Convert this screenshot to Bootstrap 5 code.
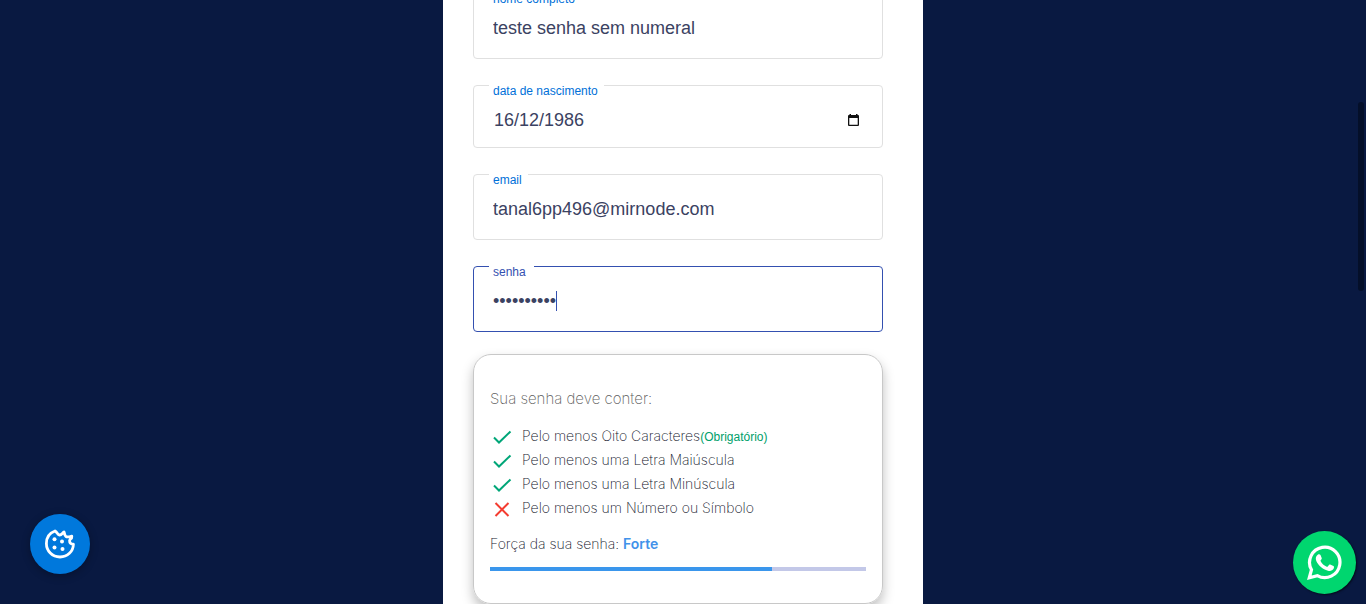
<!DOCTYPE html>
<html lang="pt-BR">
<head>
<meta charset="utf-8">
<meta name="viewport" content="width=device-width, initial-scale=1">
<title>Cadastro</title>
<link href="https://cdn.jsdelivr.net/npm/bootstrap@5.3.0/dist/css/bootstrap.min.css" rel="stylesheet">
<style>
  body { background: #091941; font-family: "Liberation Sans", sans-serif; color: #3b4262; }
  .signup-panel { max-width: 480px; padding: 0 40px 0 30px; }
  .signup-form { margin-top: -7px; }
  .fields { gap: 26px; }
  .field { border: 1px solid #e0e0e0; border-radius: 4px; height: 66px; padding: 4px 19px 0; }
  .field-date { height: 63px; padding: 7px 19px 0 20px; }
  .field label { position: absolute; top: -4px; left: 15px; padding: 0 6px 0 4px; background: #fff; color: #0070d8; font-size: 12px; line-height: 18px; }
  .field input { font-size: 18px; line-height: 24px; color: #3b4262; padding: 0; border: 0; border-radius: 0; background: transparent; box-shadow: none; }
  .field input:focus { box-shadow: none; }
  .field-active { border-color: #3450b0; }
  .field-active label { color: #3450b0; padding-right: 8px; }
  .caret-bar { position: absolute; left: 82px; top: 24px; width: 1px; height: 20px; background: #3450b0; }
  .cal-btn { width: 24px; height: 24px; margin-right: -2px; }
  .rules { margin-top: 22px; height: 250px; border: 1px solid #c8c8c8; border-radius: 18px; padding: 32px 16px 0; box-shadow: 0 6px 12px rgba(0,0,0,.25); font-family: Inter, sans-serif; font-weight: 200; font-size: 14px; line-height: 24px; color: #14162c; }
  .rules-title { font-size: 15px; color: #606060; margin-bottom: 13px; }
  .rules li { gap: 8px; height: 24px; }
  .required-tag { font-family: "Liberation Sans", sans-serif; font-size: 12px; line-height: 20px; font-weight: 400; color: #00a06a; }
  .strength { margin-top: 12px; }
  .strength strong { font-size: 14px; font-weight: 600; color: #4192ea; }
  .strength-bar { height: 4px; margin-top: 11px; border-radius: 0; background: #c3c8e8; }
  .strength-bar .progress-bar { background: #3a96ec; }
  .cookie-btn { bottom: 30px; left: 30px; width: 60px; height: 60px; background: #0078dc; box-shadow: 0 2px 8px rgba(0,0,0,.3); z-index: 5; }
  .whats-btn { bottom: 10px; right: 10px; width: 63px; height: 63px; background: #00d66f; box-shadow: 1px 1px 2px rgba(0,0,0,.6); z-index: 5; }
  .scroll-thumb { top: 102px; right: 2px; width: 6px; height: 189px; border-radius: 3px; background: #040f29; }
</style>
</head>
<body class="overflow-hidden">
<main class="signup-panel bg-white min-vh-100 mx-auto overflow-hidden">
  <form class="signup-form">
    <div class="fields d-flex flex-column">
      <div class="field position-relative d-flex align-items-center">
        <label for="nome">nome completo</label>
        <input class="form-control" id="nome" type="text" value="teste senha sem numeral">
      </div>
      <div class="field field-date position-relative d-flex align-items-center">
        <label for="nascimento">data de nascimento</label>
        <input class="form-control" id="nascimento" type="text" inputmode="numeric" value="16/12/1986">
        <button class="cal-btn btn p-0 border-0 d-flex align-items-center justify-content-center flex-shrink-0" type="button" aria-label="Abrir calendário">
          <svg width="11" height="12" viewBox="0 0 11 12"><path d="M0 2Q0 1 1 1H1.5V0H3V1H8V0H9.500V1H10Q11 1 11 2V11Q11 12 10 12H1Q0 12 0 11ZM1.300 4V10.700H9.700V4Z" fill="#111" fill-rule="evenodd"/></svg>
        </button>
      </div>
      <div class="field position-relative d-flex align-items-center">
        <label for="email">email</label>
        <input class="form-control" id="email" type="email" value="tanal6pp496@mirnode.com">
      </div>
      <div class="field field-active position-relative d-flex align-items-center">
        <label for="senha">senha</label>
        <input class="form-control" id="senha" type="password" value="abcdefghiJ">
        <span class="caret-bar"></span>
      </div>
    </div>
    <section class="rules">
      <p class="rules-title">Sua senha deve conter:</p>
      <ul class="list-unstyled mb-0">
        <li class="d-flex align-items-center"><svg width="24" height="24" viewBox="0 0 24 24" fill="none" stroke="#00a678" stroke-width="2"><path d="M4 13.500L9 18.500L20.500 7.500"/></svg><span>Pelo menos Oito Caracteres<span class="required-tag">(Obrigatório)</span></span></li>
        <li class="d-flex align-items-center"><svg width="24" height="24" viewBox="0 0 24 24" fill="none" stroke="#00a678" stroke-width="2"><path d="M4 13.500L9 18.500L20.500 7.500"/></svg><span>Pelo menos uma Letra Maiúscula</span></li>
        <li class="d-flex align-items-center"><svg width="24" height="24" viewBox="0 0 24 24" fill="none" stroke="#00a678" stroke-width="2"><path d="M4 13.500L9 18.500L20.500 7.500"/></svg><span>Pelo menos uma Letra Minúscula</span></li>
        <li class="d-flex align-items-center"><svg width="24" height="24" viewBox="0 0 24 24" fill="none" stroke="#f43c30" stroke-width="2"><path d="M5.500 7L18.500 20M18.500 7L5.500 20"/></svg><span>Pelo menos um Número ou Símbolo</span></li>
      </ul>
      <p class="strength mb-0">Força da sua senha: <strong>Forte</strong></p>
      <div class="strength-bar progress" role="progressbar" aria-label="Força da senha" aria-valuenow="75" aria-valuemin="0" aria-valuemax="100"><div class="progress-bar" style="width:75%"></div></div>
    </section>
  </form>
</main>
<button class="cookie-btn btn border-0 rounded-circle p-0 position-fixed d-flex align-items-center justify-content-center" type="button" aria-label="Preferências de cookies">
  <svg width="30" height="30" viewBox="0 0 30 30"><path d="M10 2C4.500 4 1.400 9 1.400 14.500C1.400 22 7.200 28 15 28C22.500 28 28.200 22.500 28.400 15.200C25.800 15.200 24.500 13.800 24.600 11.500C24.800 10.500 25.800 9.800 26.500 9.200L26.800 7.200C24.500 7.800 22.500 8.500 21 7.500C19.300 6.300 19.800 4.500 19 3C17.500 4 16.500 6.200 14.500 6C12.300 5.800 12.500 3.300 10 2Z" fill="none" stroke="#fff" stroke-width="2.800" stroke-linejoin="round"/><g fill="#fff"><circle cx="9.500" cy="10.200" r="2"/><circle cx="17" cy="12.500" r="2"/><circle cx="9.500" cy="18.500" r="2"/><circle cx="17.500" cy="20" r="2"/></g></svg>
</button>
<a class="whats-btn rounded-circle position-fixed d-flex align-items-center justify-content-center" href="#" aria-label="WhatsApp">
  <svg width="35" height="35" viewBox="0 0 35 35"><path d="M2.300 32.700L4.500 24.800A15.200 15.200 0 1 1 10.300 30.600Z" fill="none" stroke="#fff" stroke-width="3.200"/><path d="M11 9.600C11.700 9 13 9 13.500 10.100L14.700 13C15 13.900 14.200 14.700 13.400 15.700C14.800 18.500 17 20.600 20.200 21.900L22 19.900C22.500 19.400 23 19.400 23.700 19.700L26.500 21.100C27.200 21.500 27.100 22.500 26.700 23.500C25.800 25.400 23.300 26.400 21 25.700C15.500 24.300 11.500 20.700 9.300 16C8.200 13.400 8.900 11 11 9.600Z" fill="#fff"/></svg>
</a>
<div class="scroll-thumb position-fixed" aria-hidden="true"></div>
<script src="https://cdn.jsdelivr.net/npm/bootstrap@5.3.0/dist/js/bootstrap.bundle.min.js"></script>
</body>
</html>
